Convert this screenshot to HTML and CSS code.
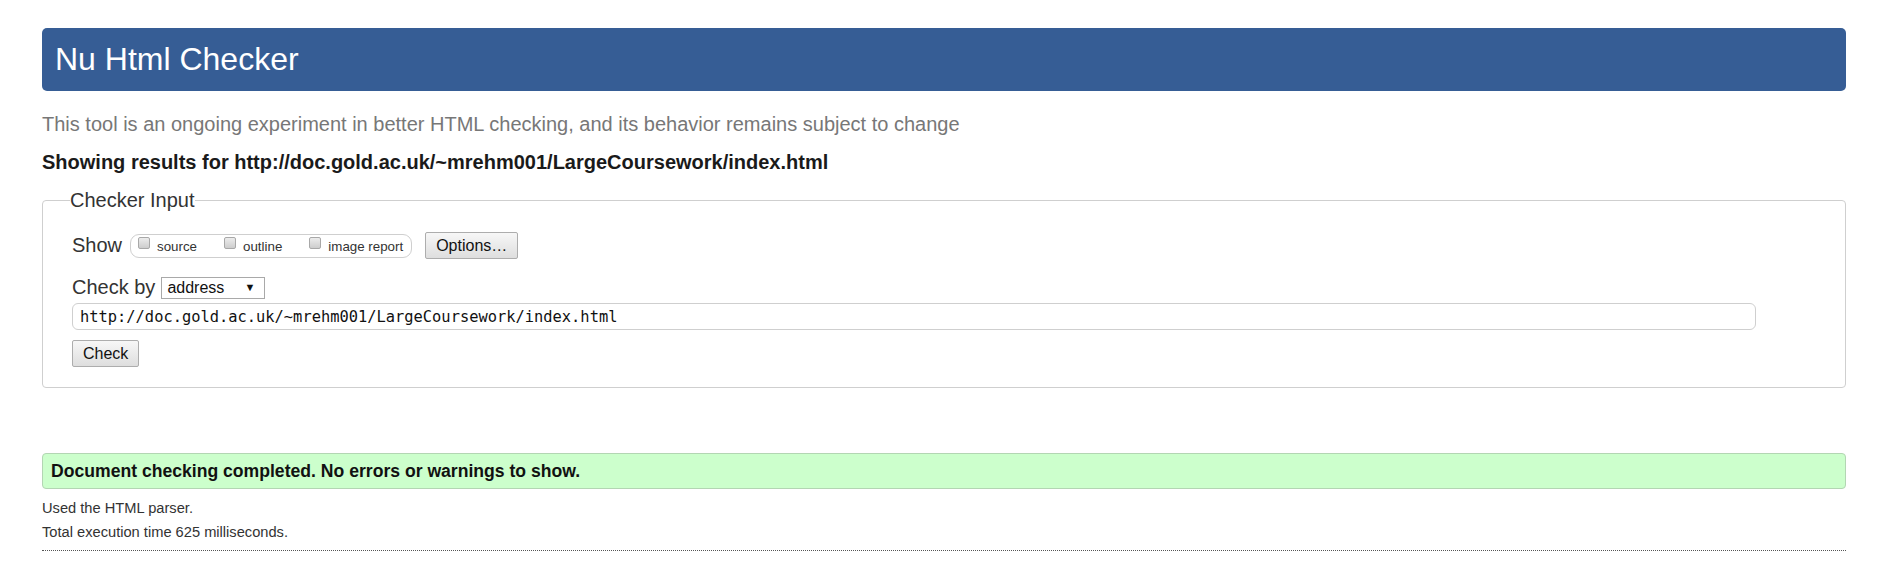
FILE: index.html
```html
<!DOCTYPE html>
<html lang="en">
<head>
<meta charset="utf-8">
<title>Nu Html Checker</title>
<link rel="stylesheet" href="styles.css">
</head>
<body>
<header class="banner"><h1 class="title">Nu Html Checker</h1></header>
<p class="lede">This tool is an ongoing experiment in better HTML checking, and its behavior remains subject to change</p>
<h2 class="results-for">Showing results for http://doc.gold.ac.uk/~mrehm001/LargeCoursework/index.html</h2>
<form class="checker">
  <fieldset class="input-set">
    <legend class="input-legend">Checker Input</legend>
    <div class="row show-row">
      <span class="row-label">Show</span>
      <span class="show-group">
        <label class="opt"><input type="checkbox" class="cb"><span class="opt-text">source</span></label>
        <label class="opt"><input type="checkbox" class="cb"><span class="opt-text">outline</span></label>
        <label class="opt"><input type="checkbox" class="cb"><span class="opt-text">image report</span></label>
      </span>
      <button type="button" class="btn btn-options">Options…</button>
    </div>
    <div class="row by-row">
      <span class="row-label">Check by</span>
      <span class="select-wrap"><select class="select"><option>address</option></select></span>
    </div>
    <div class="row url-row">
      <input class="url" type="text" value="http://doc.gold.ac.uk/~mrehm001/LargeCoursework/index.html">
    </div>
    <div class="row submit-row">
      <button type="button" class="btn btn-check">Check</button>
    </div>
  </fieldset>
</form>
<p class="success">Document checking completed. No errors or warnings to show.</p>
<div class="meta-block">
  <p class="meta">Used the HTML parser.</p>
  <p class="meta">Total execution time 625 milliseconds.</p>
</div>
<hr class="end-rule">
</body>
</html>
```
FILE: styles.css
```css
html, body {
  background: #fff;
}
body {
  margin: 0;
  padding: 28px 43px 0 42px;
  font-family: "Liberation Sans", Arial, sans-serif;
  color: #333;
}
.banner {
  box-sizing: border-box;
  height: 63px;
  background: #365d95;
  border-radius: 5px;
  padding: 0 13px;
  display: flex;
  align-items: center;
}
.title {
  margin: 0;
  font-size: 32px;
  font-weight: normal;
  line-height: 37px;
  color: #fff;
}
.lede {
  margin: 22px 0 0;
  font-size: 20px;
  line-height: 23px;
  color: #777;
}
.results-for {
  margin: 15px 0 0;
  font-size: 20px;
  line-height: 23px;
  font-weight: bold;
  color: #1a1a1a;
}
.checker {
  margin: 15px 0 0;
}
.input-set {
  margin: 0;
  min-width: 0;
  border: 1px solid #cfcfcf;
  border-radius: 4px;
  padding: 20px 0 20px 29px;
}
.input-legend {
  margin-left: -2px;
  padding: 0;
  font-size: 20px;
  line-height: 23px;
  color: #333;
}
.row {
  display: flex;
  align-items: center;
}
.row-label {
  font-size: 20px;
  line-height: 23px;
  color: #333;
}
.show-row {
  height: 27px;
}
.show-group {
  box-sizing: border-box;
  height: 24px;
  margin-left: 8px;
  border: 1px solid #cfcfcf;
  border-radius: 9px;
  padding: 0 8px 0 7px;
  display: flex;
  align-items: center;
  gap: 27px;
}
.opt {
  display: flex;
  align-items: center;
  gap: 7px;
}
.cb {
  appearance: none;
  -webkit-appearance: none;
  box-sizing: border-box;
  width: 12px;
  height: 12px;
  margin: -6px 0 0;
  border: 1px solid #a8a8a8;
  border-radius: 2px;
  background: linear-gradient(#ececec, #cdcdcd);
}
.opt-text {
  font-size: 13.33px;
  line-height: 15px;
  color: #333;
  padding-top: 2px;
}
.btn {
  box-sizing: border-box;
  height: 27px;
  padding: 0 10px;
  font-family: "Liberation Sans", Arial, sans-serif;
  font-size: 16px;
  color: #111;
  border: 1px solid #adadad;
  border-radius: 2px;
  background: linear-gradient(#f7f7f7, #dedede);
}
.btn-options {
  margin-left: 13px;
}
.by-row {
  margin-top: 17px;
  height: 23px;
}
.select-wrap {
  position: relative;
  margin-left: 6px;
  display: inline-block;
}
.select {
  appearance: none;
  -webkit-appearance: none;
  box-sizing: border-box;
  width: 104px;
  height: 22px;
  margin: 0;
  padding: 0 0 0 5px;
  border: 1px solid #a9a9a9;
  border-radius: 0;
  background: #fff;
  font-family: "Liberation Sans", Arial, sans-serif;
  font-size: 16px;
  color: #111;
  display: block;
}
.select-wrap::after {
  content: "\25BC";
  position: absolute;
  right: 10px;
  top: 4px;
  font-size: 11px;
  line-height: 13px;
  color: #111;
  pointer-events: none;
}
.url-row {
  margin-top: 4px;
}
.url {
  box-sizing: border-box;
  width: 95%;
  height: 27px;
  margin: 0;
  padding: 0 7px;
  border: 1px solid #cfcfcf;
  border-radius: 6px;
  font-family: "DejaVu Sans Mono", monospace;
  font-size: 15.4px;
  color: #111;
  background: #fff;
}
.submit-row {
  margin-top: 10px;
}
.success {
  margin: 65px 0 0;
  border: 1px solid #b3d6b3;
  border-radius: 4px;
  background: #ccffcc;
  padding: 7px 8px;
  font-size: 17.6px;
  line-height: 20px;
  font-weight: bold;
  color: #111;
}
.meta-block {
  margin-top: 7px;
}
.meta {
  margin: 0;
  font-size: 14.67px;
  line-height: 24.3px;
  color: #333;
}
.end-rule {
  margin: 5px 0 0;
  height: 0;
  border: 0;
  border-top: 1px dotted #555;
}
```
